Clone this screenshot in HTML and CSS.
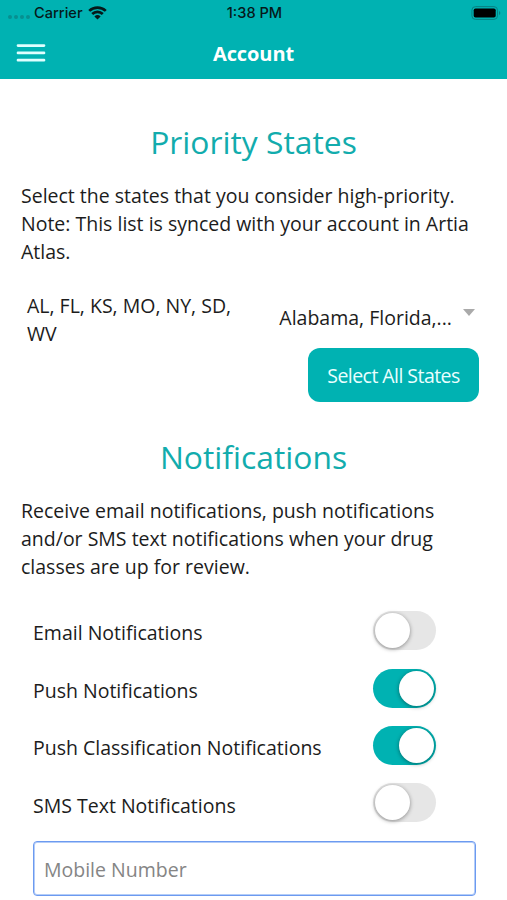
FILE: index.html
```html
<!DOCTYPE html>
<html lang="en">
<head>
    <meta charset="UTF-8">
    <meta name="viewport" content="width=device-width, initial-scale=1.0">
    <title>Account</title>
    <link rel="stylesheet" href="styles.css">
</head>
<body>
    <header>
        <div class="status-bar">
            <div class="carrier">
                <span class="signal"><i></i><i></i><i></i><i></i></span>
                <span>Carrier</span>
                <svg class="wifi" width="19" height="14" viewBox="0 0 19 14">
                    <path d="M1.2 4.9a12 12 0 0 1 16.6 0M4.2 8a7.6 7.6 0 0 1 10.6 0" fill="none" stroke="#06191a" stroke-width="2.7"/>
                    <path d="M6.4 10.4a4.6 4.6 0 0 1 6.2 0L9.5 13.6z" fill="#06191a"/>
                </svg>
            </div>
            <span class="time">1:38 PM</span>
            <svg class="battery" width="30" height="14" viewBox="0 0 30 14">
                <rect x=".9" y=".6" width="25.6" height="12.8" rx="3.6" fill="none" stroke="#078183"/>
                <rect x="2.7" y="2.5" width="22" height="9" rx="1.8"/>
                <path d="M28 5v4q1.3-.6 1.3-2T28 5z" fill="#078183"/>
            </svg>
        </div>
        <div class="nav-bar">
            <button class="menu" type="button" aria-label="Menu">
                <svg width="30" height="18" viewBox="0 0 30 18">
                    <path d="M2 1.6h26M2 8.9h26M2 16.2h26" stroke="#e0ffff" stroke-width="2.7" stroke-linecap="round"/>
                </svg>
            </button>
            <h1>Account</h1>
        </div>
    </header>
    <main>
        <section>
            <h2>Priority States</h2>
            <p>Select the states that you consider high-priority. Note: This list is synced with your account in Artia Atlas.</p>
            <div class="states">
                <div class="state-codes">AL, FL, KS, MO, NY, SD, WV</div>
                <div class="state-select">
                    <span>Alabama, Florida,...</span>
                    <i class="arrow"></i>
                </div>
            </div>
            <button class="select-all" type="button">Select All States</button>
        </section>
        <section class="notifications">
            <h2>Notifications</h2>
            <p>Receive email notifications, push notifications and/or SMS text notifications when your drug classes are up for review.</p>
            <form action="#">
                <label class="row">
                    <span>Email Notifications</span>
                    <input class="toggle" type="checkbox">
                </label>
                <label class="row">
                    <span>Push Notifications</span>
                    <input class="toggle" type="checkbox" checked>
                </label>
                <label class="row">
                    <span>Push Classification Notifications</span>
                    <input class="toggle" type="checkbox" checked>
                </label>
                <label class="row">
                    <span>SMS Text Notifications</span>
                    <input class="toggle" type="checkbox">
                </label>
                <input class="mobile" type="tel" placeholder="Mobile Number">
            </form>
        </section>
    </main>
</body>
</html>
```
FILE: styles.css
```css
* {
    box-sizing: border-box;
}
body {
    margin: 0;
    height: 900px;
    overflow: hidden;
    background-color: #fff;
    color: #1c1c1c;
    font-family: "Open Sans", "Noto Sans", sans-serif;
    font-size: 19.5px;
    line-height: 28px;
}
h1, h2, p {
    margin: 0;
}
header {
    height: 79px;
    background-color: #00b2b2;
}
.status-bar {
    display: grid;
    grid-template-columns: 1fr auto 1fr;
    align-items: center;
    height: 26px;
    padding: 0 6px 0 8px;
    color: #06191a;
    font-family: Inter, sans-serif;
    font-size: 14.6px;
    font-weight: 500;
    line-height: 24px;
}
.status-bar span {
    margin-top: -1px;
}
.carrier {
    display: flex;
    align-items: center;
}
.carrier .signal {
    display: flex;
    gap: 2px;
    margin: 8px 4px 0 0;
}
.signal i {
    width: 4px;
    height: 4px;
    border-radius: 50%;
    background-color: #078f90;
}
.wifi {
    margin: -1px 0 0 5px;
}
.battery {
    justify-self: end;
    margin-top: -1px;
}
.nav-bar {
    display: grid;
    grid-template-columns: 1fr auto 1fr;
    align-items: center;
    height: 54px;
    padding: 0 16px;
}
.menu {
    width: 30px;
    padding: 0;
    border: none;
    background: none;
}
.menu svg {
    display: block;
}
h1 {
    padding-top: 1px;
    color: #fff;
    font-size: 20px;
    font-weight: 700;
    letter-spacing: -0.1px;
}
main {
    padding: 41px 21px 0;
}
h2 {
    margin-bottom: 18px;
    color: #12acad;
    font-size: 31.8px;
    font-weight: 400;
    line-height: 44px;
    text-align: center;
}
p {
    margin-right: -4px;
}
.states {
    display: flex;
    justify-content: space-between;
    margin-top: 26px;
    padding: 0 11px 0 6px;
}
.state-codes {
    width: 215px;
}
.state-select {
    display: flex;
    gap: 11px;
    padding-top: 12px;
}
.arrow {
    margin-top: 5px;
    width: 12px;
    height: 7px;
    background-color: #aaa;
    clip-path: polygon(0 0, 100% 0, 50% 100%);
}
.select-all {
    display: block;
    width: 171px;
    height: 54px;
    margin: 0 7px 0 auto;
    padding: 1px 0 0;
    border: none;
    border-radius: 12px;
    background-color: #00b2b2;
    color: #e9ffff;
    font: inherit;
    letter-spacing: -0.55px;
}
.notifications {
    margin-top: 33px;
}
form {
    margin-top: 23.8px;
    padding: 0 11px 0 12px;
}
.row {
    display: flex;
    align-items: center;
    justify-content: space-between;
    height: 57.4px;
    padding-right: 39px;
}
.toggle {
    appearance: none;
    width: 63px;
    height: 39px;
    margin: 0 0 5.6px;
    padding: 2px;
    border-radius: 20px;
    background-color: #e6e6e6;
}
.toggle::before {
    content: "";
    display: block;
    width: 35px;
    height: 35px;
    border-radius: 50%;
    background-color: #fff;
    box-shadow: 0 1px 4px rgba(0, 0, 0, 0.4);
}
.toggle:checked {
    background-color: #00b2b2;
}
.toggle:checked::before {
    margin-left: 24px;
}
.mobile {
    display: block;
    width: 443px;
    height: 55px;
    margin-top: 6.2px;
    padding: 2px 10px 0;
    border: 1px solid #6c9af0;
    border-radius: 4px;
    background-color: #fff;
    box-shadow: inset 0 0 0 1px #b4cdf8;
    font: inherit;
}
.mobile::placeholder {
    color: #858585;
}
```
